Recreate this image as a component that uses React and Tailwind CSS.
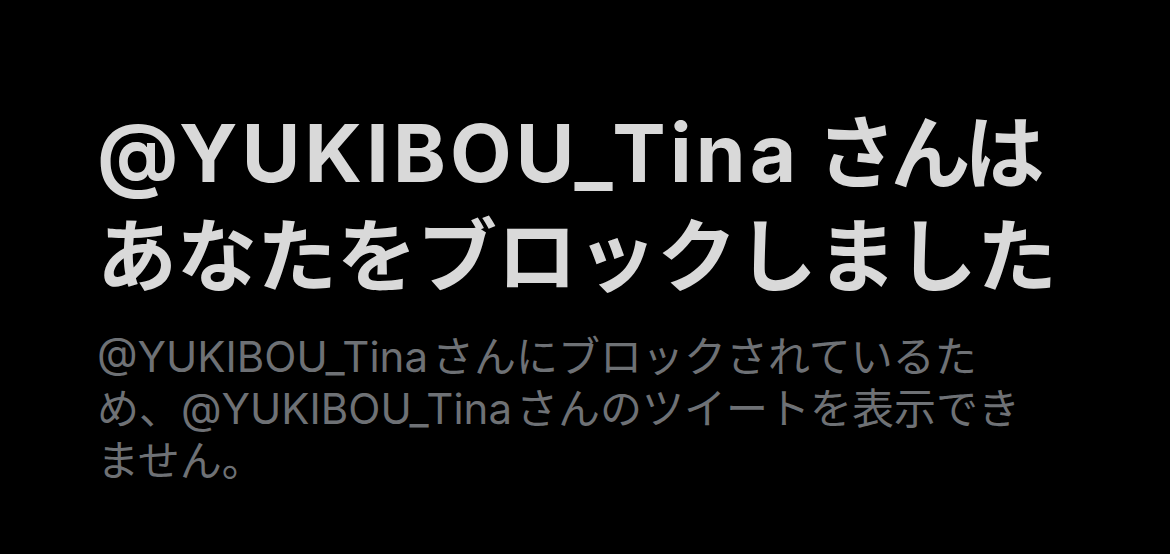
export default function App() {
  const font = { fontFamily: '"Inter", "Noto Sans CJK JP", sans-serif' };
  return (
    <div className="w-[1170px] h-[554px] bg-black overflow-hidden" style={font}>
      <div className="pl-[97px] pt-[101px]">
        <h1 className="text-[80px] leading-[103px] font-bold text-[#d9d9d9] whitespace-nowrap">
          <span className="block">
            <span className="tracking-[4.2px] mr-[16px]">@YUKIBOU_Tina</span>
            <span className="tracking-[-6px]">さんは</span>
          </span>
          <span className="block">あなたをブロックしました</span>
        </h1>
        <p className="mt-[24px] text-[42px] leading-[52px] text-[#6e7175] whitespace-nowrap">
          <span className="block">
            <span className="mr-[4px]">@YUKIBOU_Tina</span>さんにブロックされているた
          </span>
          <span className="block">
            め、<span className="mr-[4px]">@YUKIBOU_Tina</span>さんのツイートを表示でき
          </span>
          <span className="block">ません。</span>
        </p>
      </div>
    </div>
  );
}
